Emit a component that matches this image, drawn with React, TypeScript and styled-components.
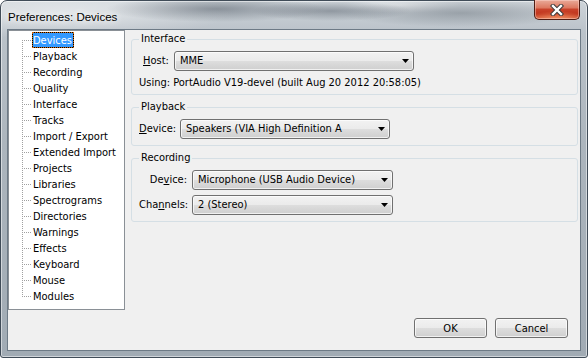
import React from 'react';
import styled, { createGlobalStyle } from 'styled-components';

const dialogFont = `"DejaVu Sans Condensed", "DejaVu Sans", "Liberation Sans", sans-serif`;

const GlobalStyle = createGlobalStyle`
  html, body {
    margin: 0;
    padding: 0;
    background: #ffffff;
    overflow: hidden;
  }
  body {
    font-family: ${dialogFont};
    font-size: 11px;
    color: #000;
  }
`;

const Window = styled.div`
  box-sizing: border-box;
  width: 588px;
  height: 358px;
  display: flex;
  flex-direction: column;
  padding: 0 7px 7px;
  border: 1px solid #404c58;
  border-radius: 7px 7px 3px 3px;
  box-shadow: inset 0 0 0 1px rgba(255, 255, 255, 0.5);
  background:
    radial-gradient(ellipse 110px 13px at 215px 8px, rgba(60, 70, 82, 0.45), transparent),
    radial-gradient(ellipse 80px 10px at 330px 10px, rgba(60, 70, 82, 0.4), transparent),
    radial-gradient(ellipse 120px 14px at 460px 12px, rgba(70, 80, 90, 0.35), transparent),
    radial-gradient(ellipse 60px 8px at 400px 4px, rgba(255, 255, 255, 0.45), transparent),
    radial-gradient(ellipse 170px 26px at 60px 12px, rgba(255, 255, 255, 0.5), transparent),
    linear-gradient(180deg, #ced4d9 0%, #bac2c9 9%, #acb5bd 40%, #a1abb4 100%);
`;

const TitleBar = styled.div`
  display: flex;
  justify-content: space-between;
  align-items: flex-start;
  height: 29px;
  flex-shrink: 0;
`;

const Title = styled.span`
  padding-top: 9px;
  font-family: "Liberation Sans", Arial, sans-serif;
  font-size: 11.5px;
  line-height: 14px;
  color: #000;
  text-shadow: 0 0 6px #fff, 0 0 10px rgba(255, 255, 255, 0.9);
`;

const CloseButton = styled.div`
  box-sizing: border-box;
  width: 46px;
  height: 20px;
  margin-top: -1px;
  display: flex;
  align-items: center;
  justify-content: center;
  border: 1px solid #4f1d14;
  border-top: none;
  border-radius: 0 0 5px 5px;
  background:
    radial-gradient(ellipse 30px 8px at 50% 100%, rgba(255, 170, 120, 0.7), transparent),
    linear-gradient(180deg, #e9aa99 0%, #dd7a62 40%, #c8422a 50%, #c0341c 75%, #d25a3a 100%);
  box-shadow: inset 0 0 0 1px rgba(255, 220, 210, 0.45);
`;

const Client = styled.div`
  flex: 1;
  display: flex;
  flex-direction: column;
  background: #f0f0f0;
  box-shadow: 0 0 0 1px #6d7a86;
`;

const Main = styled.div`
  display: flex;
  height: 280px;
`;

const Tree = styled.div`
  box-sizing: border-box;
  width: 117px;
  height: 280px;
  border: 1px solid #8a9096;
  background: #fff;
`;

const TreeList = styled.ul`
  position: relative;
  list-style: none;
  margin: 0;
  padding: 1px 0 0;

  &::before {
    content: '';
    position: absolute;
    left: 13px;
    top: 9px;
    width: 1px;
    height: 257px;
    background-image: linear-gradient(180deg, #a0a0a0 50%, transparent 50%);
    background-size: 1px 2px;
  }
`;

const TreeRow = styled.li`
  position: relative;
  height: 16px;
  display: flex;
  align-items: center;
  padding-left: 23px;

  &::before {
    content: '';
    position: absolute;
    left: 13px;
    top: 8px;
    width: 9px;
    height: 1px;
    background-image: linear-gradient(90deg, #a0a0a0 50%, transparent 50%);
    background-size: 2px 1px;
  }
`;

const TreeLabel = styled.span<{ $selected?: boolean }>`
  box-sizing: border-box;
  height: 16px;
  line-height: 15px;
  padding: 0 1px 0 0;
  white-space: nowrap;
  border: 1px ${p => (p.$selected ? 'dotted #d06a10' : 'solid transparent')};
  color: ${p => (p.$selected ? '#fff' : '#000')};
  background: ${p => (p.$selected ? 'linear-gradient(#3399ff, #3399ff) padding-box, #000' : 'none')};
`;

const Panels = styled.div`
  flex: 1;
  display: flex;
  flex-direction: column;
  gap: 5px;
  margin: 0 2px 0 6px;
  padding-top: 2px;
`;

const Group = styled.fieldset<{ $pb?: number }>`
  margin: 0;
  min-width: 0;
  padding: 5px 7px ${p => p.$pb ?? 6}px;
  border: 1px solid #d5dfe5;
  border-radius: 3px;
`;

const GroupTitle = styled.legend`
  padding: 0 2px;
  line-height: 14px;
`;

const FieldRow = styled.div<{ $label: number; $indent?: number }>`
  display: grid;
  grid-template-columns: ${p => p.$label}px auto;
  align-items: center;
  justify-content: start;
  margin-left: ${p => p.$indent ?? 0}px;

  & + & {
    margin-top: 5px;
  }
`;

const FieldLabel = styled.span<{ $right?: boolean }>`
  text-align: ${p => (p.$right ? 'right' : 'left')};
  padding-right: ${p => (p.$right ? 5 : 0)}px;
  line-height: 14px;
  white-space: nowrap;

  u {
    text-decoration-thickness: 1px;
    text-underline-offset: 1px;
  }
`;

const Combo = styled.div<{ $w: number }>`
  box-sizing: border-box;
  width: ${p => p.$w}px;
  height: 20px;
  display: flex;
  align-items: center;
  justify-content: space-between;
  padding: 0 4px 0 5px;
  border: 1px solid #707070;
  border-radius: 3px;
  background: linear-gradient(180deg, #f2f2f2 0%, #ebebeb 48%, #dddddd 52%, #cfcfcf 100%);
  box-shadow: inset 0 0 0 1px rgba(255, 255, 255, 0.7);
  white-space: nowrap;
`;

const ComboText = styled.span`
  line-height: 14px;
`;

const UsingText = styled.div`
  margin-top: 5px;
  line-height: 14px;
  white-space: nowrap;
`;

const ButtonRow = styled.div`
  display: flex;
  justify-content: flex-end;
  gap: 8px;
  padding: 8px 12px 0 0;
`;

const PushButton = styled.div`
  box-sizing: border-box;
  width: 73px;
  height: 20px;
  display: flex;
  align-items: center;
  justify-content: center;
  border: 1px solid #707070;
  border-radius: 3px;
  background: linear-gradient(180deg, #f2f2f2 0%, #ebebeb 48%, #dddddd 52%, #cfcfcf 100%);
  box-shadow: inset 0 0 0 1px rgba(255, 255, 255, 0.7);
`;

const DropArrow = () => (
  <svg width="7" height="4" viewBox="0 0 7 4">
    <path d="M0 0H7L3.5 4Z" fill="#000" />
  </svg>
);

const CloseGlyph = () => (
  <svg width="14" height="12" viewBox="0 0 14 12">
    <path d="M3 2L11 10M11 2L3 10" stroke="#3a3a3a" strokeWidth="4.4" strokeLinecap="square" />
    <path d="M3 2L11 10M11 2L3 10" stroke="#fff" strokeWidth="2.4" strokeLinecap="square" />
  </svg>
);

const pages = [
  'Devices', 'Playback', 'Recording', 'Quality', 'Interface', 'Tracks',
  'Import / Export', 'Extended Import', 'Projects', 'Libraries', 'Spectrograms',
  'Directories', 'Warnings', 'Effects', 'Keyboard', 'Mouse', 'Modules',
];

const App: React.FC = () => (
  <>
    <GlobalStyle />
    <Window>
      <TitleBar>
        <Title>Preferences: Devices</Title>
        <CloseButton><CloseGlyph /></CloseButton>
      </TitleBar>
      <Client>
        <Main>
          <Tree>
            <TreeList>
              {pages.map((name, i) => (
                <TreeRow key={name}>
                  <TreeLabel $selected={i === 0}>{name}</TreeLabel>
                </TreeRow>
              ))}
            </TreeList>
          </Tree>
          <Panels>
            <Group $pb={4}>
              <GroupTitle>Interface</GroupTitle>
              <FieldRow $label={31} $indent={4}>
                <FieldLabel><u>H</u>ost:</FieldLabel>
                <Combo $w={240}><ComboText>MME</ComboText><DropArrow /></Combo>
              </FieldRow>
              <UsingText>Using: PortAudio V19-devel (built Aug 20 2012 20:58:05)</UsingText>
            </Group>
            <Group>
              <GroupTitle>Playback</GroupTitle>
              <FieldRow $label={41}>
                <FieldLabel><u>D</u>evice:</FieldLabel>
                <Combo $w={210}><ComboText>Speakers (VIA High Definition A</ComboText><DropArrow /></Combo>
              </FieldRow>
            </Group>
            <Group>
              <GroupTitle>Recording</GroupTitle>
              <FieldRow $label={53}>
                <FieldLabel $right>De<u>v</u>ice:</FieldLabel>
                <Combo $w={201}><ComboText>Microphone (USB Audio Device)</ComboText><DropArrow /></Combo>
              </FieldRow>
              <FieldRow $label={53}>
                <FieldLabel $right>Cha<u>n</u>nels:</FieldLabel>
                <Combo $w={201}><ComboText>2 (Stereo)</ComboText><DropArrow /></Combo>
              </FieldRow>
            </Group>
          </Panels>
        </Main>
        <ButtonRow>
          <PushButton>OK</PushButton>
          <PushButton>Cancel</PushButton>
        </ButtonRow>
      </Client>
    </Window>
  </>
);

export default App;
